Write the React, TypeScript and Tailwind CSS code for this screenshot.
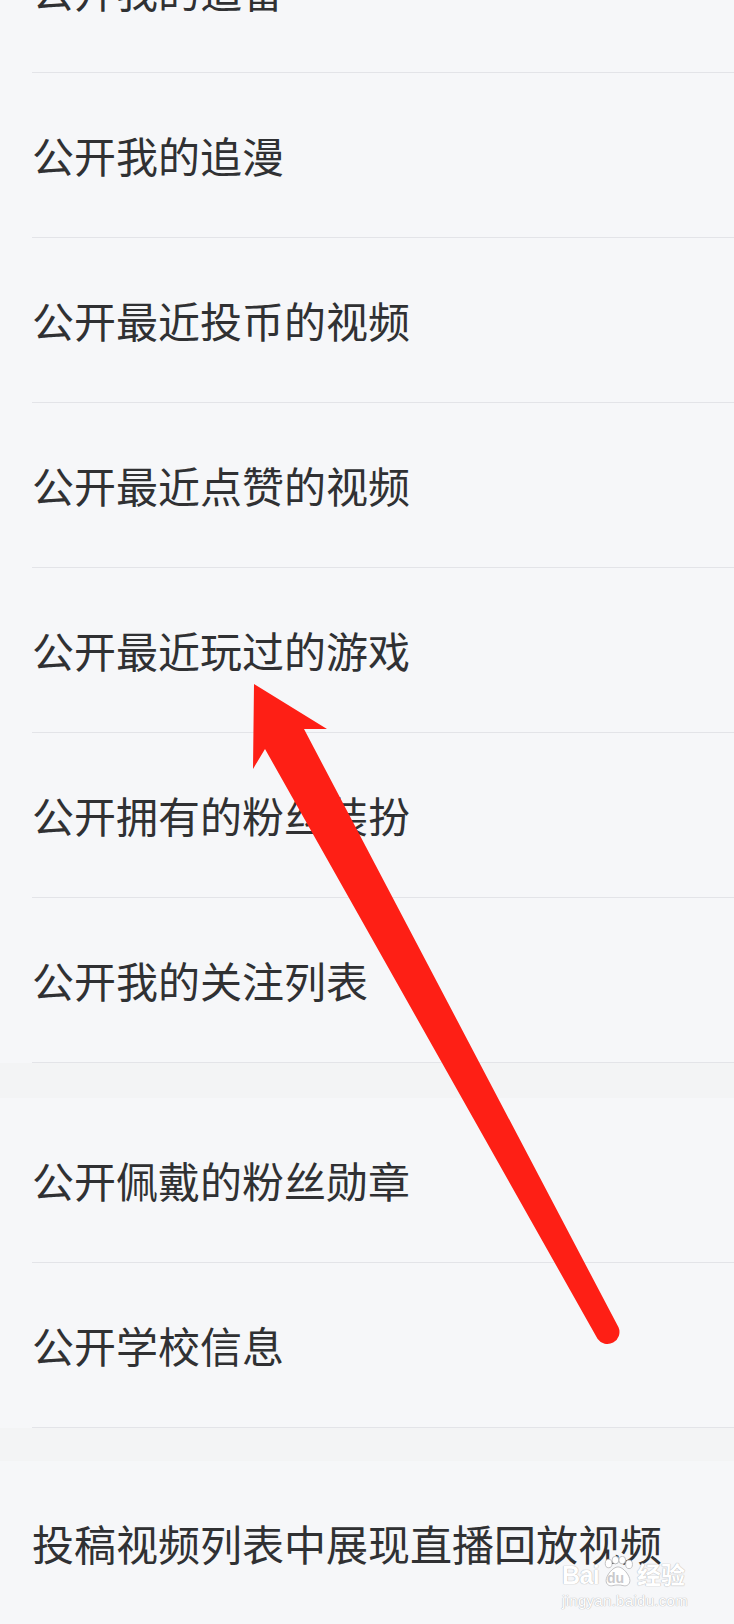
const sectionOne = [
  "公开我的追番",
  "公开我的追漫",
  "公开最近投币的视频",
  "公开最近点赞的视频",
  "公开最近玩过的游戏",
  "公开拥有的粉丝装扮",
  "公开我的关注列表",
];

const sectionTwo = ["公开佩戴的粉丝勋章", "公开学校信息"];

function Row({ label, divider = true }: { label: string; divider?: boolean }) {
  return (
    <div>
      <div className="h-[164px] flex items-center pl-8 text-[42px] leading-none text-[#303133]">
        {label}
      </div>
      {divider && <div className="ml-8 h-px bg-[#e3e4e8]" />}
    </div>
  );
}

function Watermark() {
  return (
    <div className="absolute left-[562px] top-[1556px] flex flex-col items-start text-white [text-shadow:0_0_1px_#b5b5b8,0_0_1px_#b5b5b8] font-['Liberation_Sans','Noto_Sans_CJK_SC',sans-serif]">
      <div className="flex items-end h-[32px]">
        <span className="text-[25px] font-bold leading-none tracking-tight">Bai</span>
        <span className="relative w-[34px] h-[32px] mx-[2px]">
          <svg viewBox="0 0 40 36" className="absolute inset-0 w-[34px] h-[32px]">
            <g fill="#ffffff" stroke="#b8b8bb" strokeWidth="1">
              <ellipse cx="9" cy="8" rx="4" ry="5" />
              <ellipse cx="17" cy="4" rx="4" ry="4.5" />
              <ellipse cx="25" cy="4" rx="4" ry="4.5" />
              <ellipse cx="33" cy="9" rx="4" ry="5" />
              <path d="M20 12 C14 12 6 22 6 28 C6 33 10 35 14 34 C17 33 23 33 26 34 C30 35 34 33 34 28 C34 22 26 12 20 12 Z" />
            </g>
          </svg>
          <span className="absolute left-[6px] bottom-[3px] text-[14px] font-bold leading-none text-[#c9c9cc] [text-shadow:none]">du</span>
        </span>
        <span className="text-[24px] font-bold leading-none">经验</span>
      </div>
      <div className="text-[15px] leading-none mt-[5px] tracking-[0.3px]">jingyan.baidu.com</div>
    </div>
  );
}

function Arrow() {
  return (
    <svg className="absolute left-0 top-0 w-[734px] h-[1624px] pointer-events-none" viewBox="0 0 734 1624">
      <path
        d="M254 684 L327 729 L304 729 L618.5 1327.3 A12 12 0 0 1 597.5 1338.7 L265 749 L253 769 Z"
        fill="#fe1f15"
      />
    </svg>
  );
}

export default function App() {
  return (
    <div className="relative w-[734px] h-[1624px] overflow-hidden bg-[#f6f7f9] font-['Noto_Sans_CJK_SC','Noto_Sans',sans-serif]">
      <div className="-mt-[92px]">
        {sectionOne.map((t) => (
          <Row key={t} label={t} />
        ))}
        <div className="h-[35px] bg-[#f3f4f5]" />
        {sectionTwo.map((t) => (
          <Row key={t} label={t} />
        ))}
        <div className="h-[33px] bg-[#f3f4f5]" />
        <Row label="投稿视频列表中展现直播回放视频" divider={false} />
      </div>
      <Arrow />
      <Watermark />
    </div>
  );
}
